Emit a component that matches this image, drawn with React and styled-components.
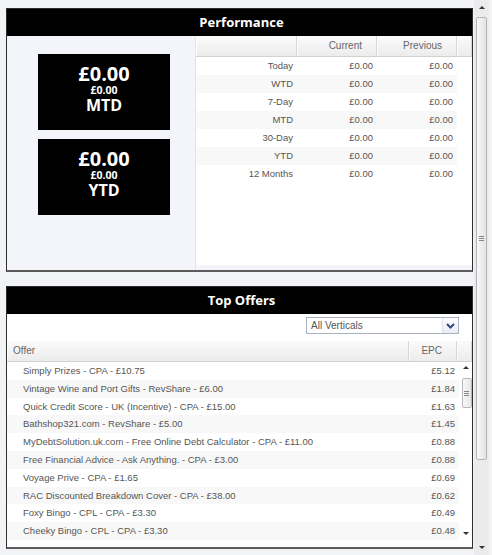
import React from "react";
import styled, { createGlobalStyle } from "styled-components";

const GlobalStyle = createGlobalStyle`
  html, body {
    margin: 0;
    padding: 0;
    background: #f2f3f7;
    font-family: "Liberation Sans", Arial, sans-serif;
    overflow: hidden;
  }
  * { box-sizing: border-box; }
`;

const Page = styled.div`
  display: flex;
  height: 555px;
  width: 492px;
`;

const Main = styled.main`
  width: 473px;
  padding: 8px 0 0 6px;
  display: flex;
  flex-direction: column;
  gap: 14px;
`;

const Panel = styled.section`
  width: 467px;
  border: 1px solid #2e2e2e;
  border-bottom: 2px solid #5c5c5c;
  background: #f4f5fa;
  display: flex;
  flex-direction: column;
`;

const PanelHeader = styled.h2`
  margin: 0;
  height: 27px;
  background: #000;
  color: #fff;
  font-family: "Open Sans", "Liberation Sans", sans-serif;
  font-weight: 700;
  font-size: 13px;
  line-height: 27px;
  text-align: center;
  padding-left: 4px;
`;

const PerfBody = styled.div`
  display: flex;
  height: 234px;
`;

const Summary = styled.div`
  width: 189px;
  border-right: 1px solid #e3e4ea;
  padding: 18px 0 0 31px;
  display: flex;
  flex-direction: column;
  gap: 9px;
`;

const StatBox = styled.div`
  width: 132px;
  height: 76px;
  background: #000;
  color: #fff;
  font-family: "Open Sans", "Liberation Sans", sans-serif;
  font-weight: 700;
  text-align: center;
  padding-top: 9px;
  display: flex;
  flex-direction: column;
`;

const BigValue = styled.div`
  font-size: 20px;
  line-height: 22px;
`;

const SmallValue = styled.div`
  font-size: 10.5px;
  line-height: 11px;
`;

const StatLabel = styled.div`
  font-size: 16px;
  line-height: 18px;
`;

const GridWrap = styled.div`
  flex: 1;
  background: #fff;
  margin-bottom: 5px;
  display: flex;
  flex-direction: column;
`;

const HeaderRow = styled.div`
  display: grid;
  grid-template-columns: ${(p) => p.$cols};
  height: 21px;
  border-bottom: 1px solid #d2d2d2;
  background: linear-gradient(#fbfbfb, #ececec);
`;

const HeaderCell = styled.div`
  border-right: 1px solid #d6d6d6;
  box-shadow: inset 1px 0 0 #fdfdfd;
  color: #666;
  font-size: 10px;
  line-height: 20px;
  text-align: ${(p) => (p.$left ? "left" : "right")};
  padding: ${(p) => (p.$left ? "0 0 0 6px" : "0 14px 0 0")};
  white-space: nowrap;
  overflow: hidden;
`;

const Row = styled.div`
  display: grid;
  grid-template-columns: ${(p) => p.$cols};
  width: ${(p) => p.$width}px;
  height: ${(p) => p.$h}px;
  background: ${(p) => (p.$odd ? "#f8f8f8" : "#fff")};
  color: #555;
  font-size: 9.5px;
  line-height: ${(p) => p.$h}px;
`;

const Cell = styled.div`
  text-align: ${(p) => (p.$left ? "left" : "right")};
  padding: ${(p) => (p.$left ? "0 0 0 16px" : "0 4px 0 0")};
  white-space: nowrap;
  overflow: hidden;
`;

const Toolbar = styled.div`
  height: 27px;
  background: #fff;
  display: flex;
  justify-content: flex-end;
  padding: 3px 13px 0 0;
`;

const Select = styled.div`
  width: 153px;
  height: 17px;
  border: 1px solid #a7b1bf;
  background: #fff;
  display: flex;
  align-items: center;
  color: #555;
  font-size: 10px;
`;

const SelectText = styled.span`
  flex: 1;
  padding-left: 4px;
`;

const SelectButton = styled.span`
  width: 16px;
  height: 15px;
  background: linear-gradient(#fdfdfd, #e9edf3);
  border-left: 1px solid #e0e4ea;
  display: flex;
  align-items: center;
  justify-content: center;
`;

const OfferBody = styled.div`
  height: 185px;
  background: #fff;
  display: flex;
`;

const OfferRows = styled.div`
  width: 452px;
`;

const MiniScroll = styled.div`
  width: 13px;
  display: flex;
  flex-direction: column;
  align-items: center;
  padding-top: 4px;
`;

const Arrow = styled.div`
  width: 0;
  height: 0;
  border-left: 3px solid transparent;
  border-right: 3px solid transparent;
  ${(p) =>
    p.$down
      ? "border-top: 3px solid #333;"
      : "border-bottom: 3px solid #333;"}
`;

const MiniThumb = styled.div`
  width: 10px;
  height: 30px;
  margin: 9px 0 0 2px;
  border: 1px solid #b9b9b9;
  border-radius: 2px;
  background: linear-gradient(90deg, #f7f7f7, #e7e7e7);
  display: flex;
  align-items: center;
  justify-content: center;
`;

const Grip = styled.div`
  width: 5px;
  height: 5px;
  border-top: 1px solid #888;
  border-bottom: 1px solid #888;
  position: relative;
  &::after {
    content: "";
    position: absolute;
    left: 0;
    right: 0;
    top: 1px;
    border-top: 1px solid #888;
  }
`;

const Spacer = styled.div`
  flex: 1;
`;

const DownSlot = styled.div`
  height: 16px;
  display: flex;
  align-items: flex-start;
  padding-top: 1px;
`;

const PageScroll = styled.div`
  width: 15px;
  margin-left: 1px;
  height: 555px;
  background: #ebebeb;
  display: flex;
  flex-direction: column;
  align-items: center;
  padding-top: 6px;
`;

const PageThumb = styled.div`
  width: 11px;
  height: 443px;
  margin-top: 8px;
  border: 1px solid #b4b4b4;
  border-radius: 2px;
  background: linear-gradient(90deg, #f8f8f8, #e4e4e4);
  display: flex;
  align-items: center;
  justify-content: center;
`;

const PageDown = styled.div`
  margin-top: auto;
  margin-bottom: 6px;
`;

const perfRows = [
  ["Today", "£0.00", "£0.00"],
  ["WTD", "£0.00", "£0.00"],
  ["7-Day", "£0.00", "£0.00"],
  ["MTD", "£0.00", "£0.00"],
  ["30-Day", "£0.00", "£0.00"],
  ["YTD", "£0.00", "£0.00"],
  ["12 Months", "£0.00", "£0.00"],
];

const offers = [
  ["Simply Prizes - CPA - £10.75", "£5.12"],
  ["Vintage Wine and Port Gifts - RevShare - £6.00", "£1.84"],
  ["Quick Credit Score - UK (Incentive) - CPA - £15.00", "£1.63"],
  ["Bathshop321.com - RevShare - £5.00", "£1.45"],
  ["MyDebtSolution.uk.com - Free Online Debt Calculator - CPA - £11.00", "£0.88"],
  ["Free Financial Advice - Ask Anything. - CPA - £3.00", "£0.88"],
  ["Voyage Prive - CPA - £1.65", "£0.69"],
  ["RAC Discounted Breakdown Cover - CPA - £38.00", "£0.62"],
  ["Foxy Bingo - CPL - CPA - £3.30", "£0.49"],
  ["Cheeky Bingo - CPL - CPA - £3.30", "£0.48"],
];

const Stat = ({ label }) => (
  <StatBox>
    <BigValue>£0.00</BigValue>
    <SmallValue>£0.00</SmallValue>
    <StatLabel>{label}</StatLabel>
  </StatBox>
);

export default function App() {
  return (
    <>
      <GlobalStyle />
      <Page>
        <Main>
          <Panel>
            <PanelHeader>Performance</PanelHeader>
            <PerfBody>
              <Summary>
                <Stat label="MTD" />
                <Stat label="YTD" />
              </Summary>
              <GridWrap>
                <HeaderRow $cols="101px 80px 80px 14px">
                  <HeaderCell />
                  <HeaderCell>Current</HeaderCell>
                  <HeaderCell>Previous</HeaderCell>
                  <HeaderCell />
                </HeaderRow>
                {perfRows.map((r, i) => (
                  <Row key={r[0]} $cols="101px 80px 80px" $width={261} $h={18} $odd={i % 2 === 1}>
                    <Cell>{r[0]}</Cell>
                    <Cell>{r[1]}</Cell>
                    <Cell>{r[2]}</Cell>
                  </Row>
                ))}
              </GridWrap>
            </PerfBody>
          </Panel>

          <Panel>
            <PanelHeader>Top Offers</PanelHeader>
            <Toolbar>
              <Select>
                <SelectText>All Verticals</SelectText>
                <SelectButton>
                  <svg width="9" height="6" viewBox="0 0 9 6">
                    <path d="M1 1 L4.5 4.5 L8 1" fill="none" stroke="#2d4c7e" strokeWidth="2" />
                  </svg>
                </SelectButton>
              </Select>
            </Toolbar>
            <HeaderRow $cols="402px 48px 15px">
              <HeaderCell $left>Offer</HeaderCell>
              <HeaderCell>EPC</HeaderCell>
              <HeaderCell />
            </HeaderRow>
            <OfferBody>
              <OfferRows>
                {offers.map((o, i) => (
                  <Row key={o[0]} $cols="403px 49px" $width={452} $h={17.8} $odd={i % 2 === 1}>
                    <Cell $left>{o[0]}</Cell>
                    <Cell>{o[1]}</Cell>
                  </Row>
                ))}
              </OfferRows>
              <MiniScroll>
                <Arrow />
                <MiniThumb>
                  <Grip />
                </MiniThumb>
                <Spacer />
                <DownSlot>
                  <Arrow $down />
                </DownSlot>
              </MiniScroll>
            </OfferBody>
          </Panel>
        </Main>
        <PageScroll>
          <Arrow />
          <PageThumb>
            <Grip />
          </PageThumb>
          <PageDown>
            <Arrow $down />
          </PageDown>
        </PageScroll>
      </Page>
    </>
  );
}
